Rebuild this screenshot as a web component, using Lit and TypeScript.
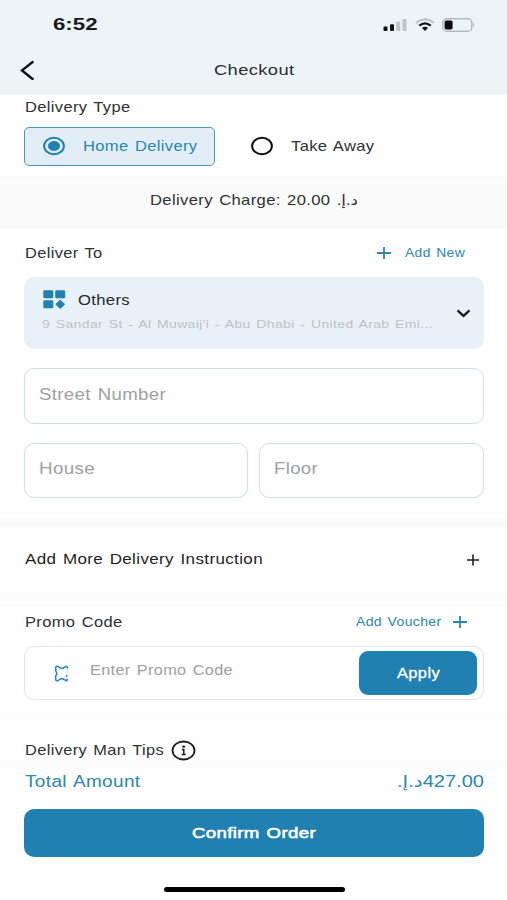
import { LitElement, html, css, svg } from "lit";
import { customElement, property } from "lit/decorators.js";
import { styleMap } from "lit/directives/style-map.js";

/** One line of extended-width lettering that fills exactly `span` pixels. */
@customElement("wide-text")
class WideText extends LitElement {
  @property({ type: Number }) span = 100;
  @property({ type: Number }) factor = 1;

  static styles = css`
    :host { display: block; flex: none; height: 20px; line-height: 20px; white-space: nowrap; letter-spacing: 0.3px; word-spacing: 1.2px; }
    .box { display: block; height: 20px; }
    .ink { display: inline-block; transform-origin: 0 50%; }
  `;

  firstUpdated() {
    const ink = this.renderRoot.querySelector(".ink") as HTMLElement;
    const natural = ink.getBoundingClientRect().width;
    if (natural > 0) this.factor = this.span / natural;
  }

  render() {
    return html`<span class="box" style=${styleMap({ width: `${this.span}px` })}
      ><span class="ink" style=${styleMap({ transform: `scaleX(${this.factor})` })}><slot></slot></span></span>`;
  }
}

const radio = (on: boolean) => html`<svg class="radio" width="24" height="20" viewBox="0 0 24 20">
  <ellipse cx="12" cy="10" rx="9.9" ry="8.2" fill="none" stroke="currentColor" stroke-width="2"/>
  ${on ? svg`<ellipse cx="12" cy="10" rx="6" ry="5" fill="currentColor"/>` : ""}
</svg>`;

const plus = html`<svg class="plus" width="14" height="12" viewBox="0 0 14 12">
  <path d="M0 6H14M7 0V12" stroke="currentColor" stroke-width="1.8" fill="none"/>
</svg>`;

@customElement("app-root")
class AppRoot extends LitElement {
  static styles = css`
    :host {
      display: block; width: 507px; height: 900px; overflow: hidden; background: #fefefe;
      font-family: "Liberation Sans", "DejaVu Sans", sans-serif; font-size: 14.2px; color: #303133;
      --blue: #1f80b1;
    }
    * { box-sizing: border-box; }
    svg { display: block; flex: none; }
    .row { display: flex; align-items: center; }
    .push { margin-left: auto; }
    .blue { color: #2b86b4; }
    .link { color: #2b86b4; font-size: 12.2px; }
    .hint { color: #a0a0a0; }
    .big { font-size: 16px; }

    .head { height: 95px; background: #ecf4f8; }
    .status { height: 49px; padding: 0 32px 0 53px; }
    .clock { font-size: 17px; font-weight: bold; color: #17191b; letter-spacing: 0; }
    .signal { margin-left: auto; }
    .wifi { margin-left: 8px; }
    .battery { margin-left: 7px; }
    .nav { height: 42px; padding-left: 20px; }
    .title { font-size: 15px; margin-left: 178.5px; color: #2a2c2e; }

    .types { height: 81px; padding: 2px 24px 0; }
    .types > wide-text { margin-left: 0.5px; }
    .options { margin-top: 10px; height: 39px; }
    .option { height: 39px; width: 191px; padding: 0 0 1px 17px; border: 1.5px solid #4a98c2; border-radius: 5px; background: #e2edf5; }
    .option .radio { margin-right: 16.5px; color: var(--blue); }
    .other { padding: 0 0 1px 35px; color: #303133; }
    .other .radio { margin-right: 16.5px; color: #111; }

    .charge { height: 53px; padding-bottom: 5px; justify-content: center; background: #fbfbfb; border-top: 2px solid #f8f8f9; border-bottom: 3px solid #f9fafa; }

    .deliver { height: 289px; padding: 14px 23.5px 0 24px; }
    .heading { height: 20px; padding-left: 0.5px; }
    .add { margin-right: 19px; gap: 14px; color: #2b86b4; }
    .card { margin-top: 14px; height: 72px; border-radius: 10px; background: #e8f1f7; padding: 0 13px 0 19px; }
    .place { gap: 12px; height: 20px; font-size: 14.5px; color: #25282a; }
    .address { font-size: 11.8px; color: #bcc3c8; margin-top: 4px; margin-left: -1px; }
    .place-box { padding-bottom: 3px; }
    .field { border: 1px solid #cfe1ea; border-radius: 10px; background: #fefefe; padding: 0 14px 3px; flex: 1; height: 55px; }
    .street { margin-top: 19px; height: 56px; }
    .pair { display: flex; gap: 11px; margin-top: 19px; }
    .pair .field { padding-bottom: 4px; }

    .gap { height: 8px; background: #f9fafb; }
    .instruction { height: 67px; padding: 0 27px 0 24.5px; color: #1e1f20; font-size: 14px; }
    .instruction wide-text { margin-bottom: 1px; }
    .instruction .plus { transform: scale(0.88, 0.95); }

    .promo { height: 114px; padding: 11px 23.5px 0 24px; }
    .voucher { margin-right: 17px; gap: 11px; color: #2b86b4; }
    .code { margin-top: 14px; height: 54px; border: 1px solid #dde8ec; border-radius: 10px; padding: 0 6px 0 28.5px; }
    .code .hint { font-size: 14px; margin: 0 0 7px 21.5px; }
    .apply { margin-left: auto; width: 118px; height: 44px; border-radius: 9px; background: #1f80b1; color: #fff; justify-content: center; -webkit-text-stroke: 0.3px #fff; padding: 0 0 1px 1px; }

    .tips { height: 51px; padding: 21px 24px 0 24.5px; gap: 7.5px; align-items: center; border-top: 2px solid #fcfdfd; border-bottom: 4px solid #fafbfb; }
    .foot { height: 134px; background: #fefefe; padding: 6px 23.5px 0 24px; }
    .total { height: 20px; padding: 0 0 0 0.5px; color: #2b86b4; font-size: 15.8px; }
    .confirm { margin-top: 17px; height: 48px; border-radius: 10px; background: #1f80b1; color: #fff; justify-content: center; font-size: 15.5px; -webkit-text-stroke: 0.6px #fff; }
    .home { width: 181px; height: 5px; border-radius: 3px; background: #000; margin: 30px 0 0 139.5px; }
  `;

  render() {
    return html`
      <header class="head">
        <div class="row status">
          <wide-text class="clock" span="44.5">6:52</wide-text>
          <svg class="signal" width="24" height="14" viewBox="0 0 24 14">
            <rect x="0.5" y="8.5" width="4" height="4.5" rx="1" fill="#111"/>
            <rect x="7" y="6.2" width="4" height="6.8" rx="1" fill="#111"/>
            <rect x="13.2" y="3.6" width="4" height="9.4" rx="1" fill="#bec4c7"/>
            <rect x="19.5" y="1" width="4" height="12" rx="1" fill="#bec4c7"/>
          </svg>
          <svg class="wifi" width="20" height="14" viewBox="0 0 20 14">
            <path d="M1 5Q10-2.2 19 5" fill="none" stroke="#bec4c7" stroke-width="2.2"/>
            <path d="M4.3 7.7Q10 2.9 15.7 7.7" fill="none" stroke="#111" stroke-width="2.2"/>
            <path d="M7 10Q10 7.6 13 10L10 13Z" fill="#111"/>
          </svg>
          <svg class="battery" width="33" height="14" viewBox="0 0 33 14">
            <rect x="0.8" y="0.8" width="29" height="12.4" rx="3.8" fill="none" stroke="#b3b8bb" stroke-width="1.4"/>
            <rect x="2.6" y="2.6" width="8" height="8.8" rx="1.6" fill="#0c0c0c"/>
            <path d="M31 4.6Q33.4 7 31 9.4Z" fill="#b3b8bb"/>
          </svg>
        </div>
        <div class="row nav">
          <svg width="15" height="20" viewBox="0 0 15 20">
            <path d="M12.6 2L2 10.4L12.6 19" fill="none" stroke="#111" stroke-width="2.4" stroke-linecap="round" stroke-linejoin="miter"/>
          </svg>
          <wide-text class="title" span="80.5">Checkout</wide-text>
        </div>
      </header>

      <section class="types">
        <wide-text span="105.5">Delivery Type</wide-text>
        <div class="row options">
          <div class="row option">${radio(true)}<wide-text class="blue" span="114.5">Home Delivery</wide-text></div>
          <div class="row other">${radio(false)}<wide-text span="83.5">Take Away</wide-text></div>
        </div>
      </section>

      <div class="row charge">
        <wide-text span="208">Delivery Charge: 20.00 <bdi dir="rtl">د.إ.</bdi></wide-text>
      </div>

      <section class="deliver">
        <div class="row heading">
          <wide-text span="77.5">Deliver To</wide-text>
          <div class="row push add">${plus}<wide-text class="link" span="60">Add New</wide-text></div>
        </div>
        <div class="row card">
          <div class="place-box">
            <div class="row place">
              <svg width="23" height="19" viewBox="0 0 23 19">
                <rect x="0.3" y="0.3" width="10" height="8" rx="1.4" fill="#1f80b1"/>
                <rect x="12.2" y="0.3" width="10" height="8" rx="1.4" fill="#1f80b1"/>
                <rect x="0.3" y="10.3" width="10" height="8" rx="1.4" fill="#1f80b1"/>
                <path d="M17.2 10.2L21.6 14.3L17.2 18.4L12.8 14.3Z" fill="#1f80b1" stroke="#1f80b1" stroke-linejoin="round"/>
              </svg>
              <wide-text span="52">Others</wide-text>
            </div>
            <wide-text class="address" span="391">9 Sandar St - Al Muwaij'i - Abu Dhabi - United Arab Emi...</wide-text>
          </div>
          <svg class="push" width="15" height="9" viewBox="0 0 15 9">
            <path d="M1.5 1.4L7.5 6.9L13.5 1.4" fill="none" stroke="#161819" stroke-width="2.2"/>
          </svg>
        </div>
        <div class="row field street"><wide-text class="hint big" span="127">Street Number</wide-text></div>
        <div class="pair">
          <div class="row field"><wide-text class="hint big" span="56">House</wide-text></div>
          <div class="row field"><wide-text class="hint big" span="44">Floor</wide-text></div>
        </div>
      </section>

      <div class="gap"></div>
      <div class="row instruction">
        <wide-text span="238">Add More Delivery Instruction</wide-text>
        <span class="push">${plus}</span>
      </div>
      <div class="gap"></div>

      <section class="promo">
        <div class="row heading">
          <wide-text span="97.5">Promo Code</wide-text>
          <div class="row push voucher"><wide-text class="link" span="85.5">Add Voucher</wide-text>${plus}</div>
        </div>
        <div class="row code">
          <svg width="15" height="17" viewBox="0 0 15 17">
            <path d="M13.2 3.4V2.4Q13.2 1.1 11.8 1.4L9.8 2.8Q7.8 4 6 2.8L4.2 1.5Q1.7 0.8 1.7 2.8V6Q2.8 7.2 2.8 8.5T1.7 11V14.2Q1.7 16.2 4.2 15.5L6 14.2Q7.8 13 9.8 14.2L11.8 15.6Q13.2 15.9 13.2 14.6V13.8" fill="none" stroke="#3088b8" stroke-width="1.6"/>
            <path d="M13.3 4.5V8.6" stroke="#c9dfeb" stroke-width="1"/>
            <circle cx="12.7" cy="10.8" r="1.1" fill="#3d93bf"/>
          </svg>
          <wide-text class="hint" span="143">Enter Promo Code</wide-text>
          <div class="row apply"><wide-text span="43">Apply</wide-text></div>
        </div>
      </section>

      <section class="row tips">
        <wide-text span="139">Delivery Man Tips</wide-text>
        <svg width="25" height="21" viewBox="0 0 25 21">
          <ellipse cx="12.5" cy="10.5" rx="11" ry="9" fill="none" stroke="#1c1d1e" stroke-width="1.8"/>
          <ellipse cx="12.6" cy="6.6" rx="1.5" ry="1.2" fill="#1c1d1e"/>
          <path d="M10.9 9.4H12.8V14.2M10.7 14.6H14.7" fill="none" stroke="#1c1d1e" stroke-width="1.5"/>
        </svg>
      </section>

      <footer class="foot">
        <div class="row total">
          <wide-text span="115.5">Total Amount</wide-text>
          <wide-text class="push" span="87"><bdi dir="rtl">د.إ.</bdi>427.00</wide-text>
        </div>
        <div class="row confirm"><wide-text span="124">Confirm Order</wide-text></div>
        <div class="home"></div>
      </footer>
    `;
  }
}
